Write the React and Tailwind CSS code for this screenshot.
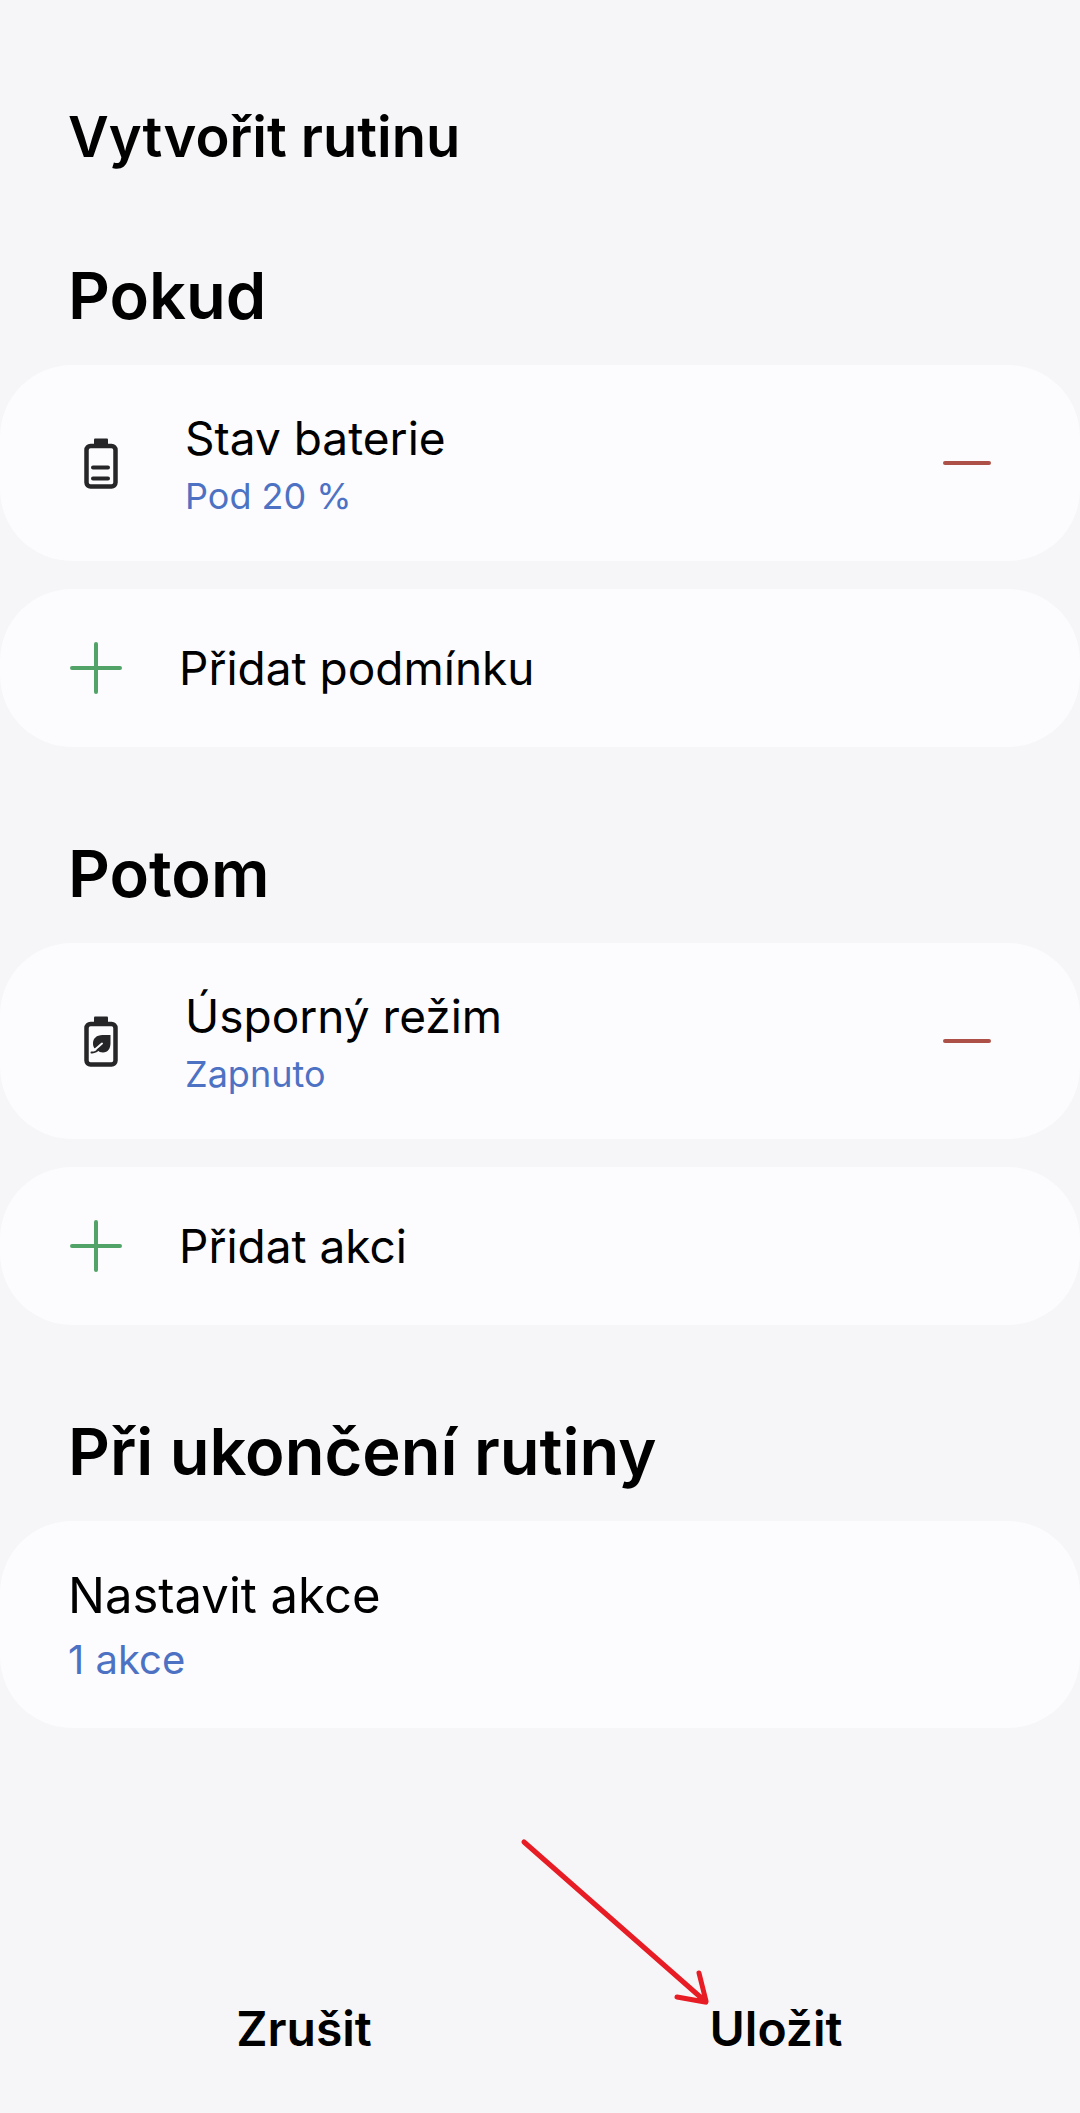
function BatteryIcon({ children }) {
  return (
    <svg className="w-[34px] h-[51px]" viewBox="0 0 34 51" fill="none" aria-hidden="true">
      <path d="M10 7V1.500a1 1 0 0 1 1-1h12a1 1 0 0 1 1 1V7z" fill="#262628" />
      <rect x="2.500" y="8" width="29" height="40.500" rx="4" stroke="#262628" strokeWidth="4.500" />
      {children}
    </svg>
  )
}

function BatteryLevelIcon() {
  return (
    <BatteryIcon>
      <path d="M9 29.500h15M9 40.500h15" stroke="#262628" strokeWidth="4" strokeLinecap="round" />
    </BatteryIcon>
  )
}

function BatterySaverIcon() {
  return (
    <BatteryIcon>
      <path
        d="M26.500 19H18.500C12.500 19 9 22.500 9 27.500c0 2 .5 3.500 1.500 5l3 1.500c1.300 1.700 3 2.500 5.500 2.500 5 0 7.500-4 7.500-9.500z"
        fill="#262628"
      />
      <path d="M9 34.200c3.500-.7 5.500-4.200 9-6.700" stroke="#fcfcfe" strokeWidth="2" strokeLinecap="round" />
      <path d="M7.500 36.500c3.500.2 6-1.500 8-4" stroke="#262628" strokeWidth="2" strokeLinecap="round" />
    </BatteryIcon>
  )
}

function PlusIcon() {
  return (
    <svg className="w-[52px] h-[52px]" viewBox="0 0 52 52" fill="none" aria-hidden="true">
      <path d="M26 2v48M2 26h48" stroke="#51a368" strokeWidth="4" strokeLinecap="round" />
    </svg>
  )
}

function Section({ title, children }) {
  return (
    <section>
      <h2 className="px-[68px] text-[65px] leading-[80px] font-semibold">{title}</h2>
      <div className="mt-[29px] flex flex-col gap-7">{children}</div>
    </section>
  )
}

function RoutineItem({ icon: Icon, name, value }) {
  return (
    <div className="flex items-center rounded-[72px] bg-[#fcfcfe] py-10 pl-[69px] pr-[81px]">
      <div className="flex w-16 justify-center">
        <Icon />
      </div>
      <div className="ml-[52px] flex-1">
        <div className="text-[46px] leading-[66px]">{name}</div>
        <div className="text-[36px] leading-[50px] text-[#4d72c4]">{value}</div>
      </div>
      <button type="button" aria-label={`Odebrat: ${name}`} className="flex h-16 w-16 items-center justify-center">
        <span className="h-1 w-12 rounded-full bg-[#ad5047]" />
      </button>
    </div>
  )
}

function AddButton({ label }) {
  return (
    <button type="button" className="flex w-full items-center rounded-[72px] bg-[#fcfcfe] py-[46px] pl-[70px] text-left">
      <PlusIcon />
      <span className="ml-[57px] text-[46px] leading-[66px]">{label}</span>
    </button>
  )
}

function App() {
  return (
    <div className="flex min-h-screen flex-col bg-[#f6f6f8] font-['Inter',sans-serif] text-black">
      <header className="px-[68px] pt-[101px]">
        <h1 className="text-[56px] leading-[72px] font-semibold">Vytvořit rutinu</h1>
      </header>

      <main className="mt-[83px] flex flex-col gap-[87px]">
        <Section title="Pokud">
          <RoutineItem icon={BatteryLevelIcon} name="Stav baterie" value="Pod 20 %" />
          <AddButton label="Přidat podmínku" />
        </Section>

        <Section title="Potom">
          <RoutineItem icon={BatterySaverIcon} name="Úsporný režim" value="Zapnuto" />
          <AddButton label="Přidat akci" />
        </Section>

        <Section title="Při ukončení rutiny">
          <button type="button" className="w-full rounded-[72px] bg-[#fcfcfe] px-[68px] py-10 text-left">
            <span className="block text-[49px] leading-[70px]">Nastavit akce</span>
            <span className="block text-[40px] leading-[57px] text-[#4d72c4]">1 akce</span>
          </button>
        </Section>
      </main>

      <footer className="mt-auto grid grid-cols-2 px-17 pb-13 text-[48px] leading-[64px] font-semibold">
        <button type="button">Zrušit</button>
        <button type="button">
          <span className="relative inline-block">
            Uložit
            {/* Arrow pointing at the save button */}
            <svg
              className="pointer-events-none absolute right-full bottom-[calc(100%-9px)] h-[168px] w-[192px]"
              viewBox="0 0 192 168"
              fill="none"
              aria-hidden="true"
            >
              <path
                d="M6 4l182 160M181 135l7 28M159 159l28 5"
                stroke="#e81c24"
                strokeWidth="5"
                strokeLinecap="round"
              />
            </svg>
          </span>
        </button>
      </footer>
    </div>
  )
}

export default App
